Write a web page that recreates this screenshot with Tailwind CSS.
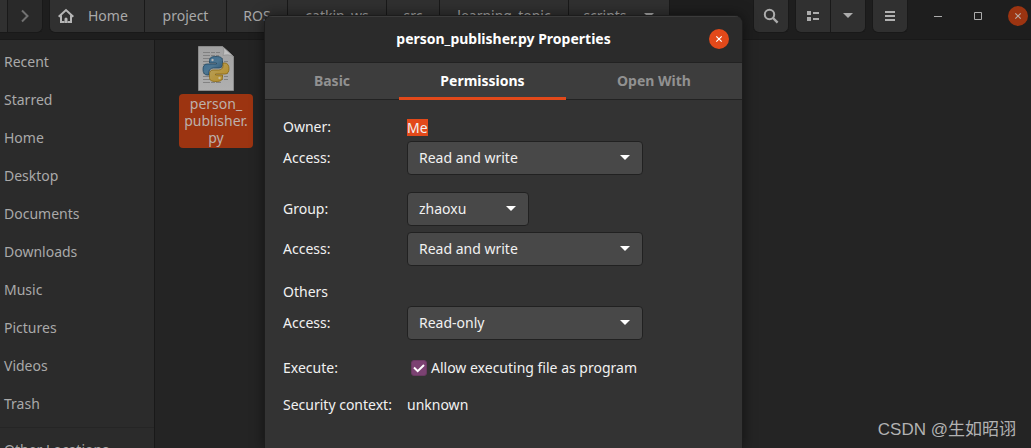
<!DOCTYPE html>
<html lang="en">
<head>
<meta charset="utf-8">
<title>person_publisher.py Properties</title>
<script src="https://cdn.jsdelivr.net/npm/@tailwindcss/browser@4"></script>
</head>
<body class="relative flex h-screen flex-col overflow-hidden bg-[#242424] font-['Noto_Sans','Open_Sans',sans-serif] text-sm leading-5 text-[#a9a9a9]">

<header class="flex h-10 shrink-0 items-start border-b border-[#191919] bg-[#1e1e1e]">
  <div class="flex h-[33px] shrink-0">
    <button aria-label="Back" class="w-2 border-r border-b border-[#191919] bg-[#303030]"></button>
    <button aria-label="Forward" class="flex w-[35px] items-center justify-center rounded-br-md border-r border-b border-[#191919] bg-[#292929]">
      <svg class="size-4" viewBox="0 0 16 16" fill="none" stroke="#717171" stroke-width="2"><path d="M5 2.5 10.5 8 5 13.5"/></svg>
    </button>
  </div>
  <nav aria-label="Path" class="ml-1.5 flex h-[33px] shrink-0 divide-x divide-[#191919] overflow-hidden rounded-b-md border-x border-b border-[#191919] bg-[#303030]">
    <button class="flex w-[95px] items-center gap-3.5 pl-2">
      <svg class="size-4" viewBox="0 0 16 16" fill="none" stroke="#b5b5b5" stroke-width="2"><path d="M.7 8.700 8 2l7.300 6.700M3 7.500v6.500h3.500M13 7.500v6.500H9.500"/><path fill="#b5b5b5" stroke="none" d="M6.500 15v-4a1.500 1.500 0 0 1 3 0v4z"/></svg>
      Home
    </button>
    <button class="w-[82px]">project</button>
    <button class="w-[61px]">ROS</button>
    <button class="w-[99px]">catkin_ws</button>
    <button class="w-[53px]">src</button>
    <button class="w-[129px]">learning_topic</button>
    <button class="flex w-[100px] items-center justify-center gap-4">scripts
      <svg class="h-1.5 w-3" viewBox="0 0 12 6" fill="#a9a9a9"><path d="M1 0h10L6 5z"/></svg>
    </button>
  </nav>
  <div class="ml-auto flex h-[33px] shrink-0 gap-1.5 pr-[3px]">
    <button aria-label="Search" class="flex w-9 items-center justify-center rounded-b-md border-x border-b border-[#191919] bg-[#303030]">
      <svg class="size-4" viewBox="0 0 16 16" fill="none" stroke="#acacac" stroke-width="2"><circle cx="6.500" cy="6.500" r="4.700"/><path stroke-width="2.400" d="m10 10 4.600 4.600"/></svg>
    </button>
    <div class="flex divide-x divide-[#191919] rounded-b-md border-x border-b border-[#191919] bg-[#303030]">
      <button aria-label="List view" class="flex w-[35px] items-center justify-center">
        <svg class="size-4" viewBox="0 0 16 16" fill="#acacac"><path d="M2 3h4v4H2zM2 9h4v4H2zM8 4h6v2H8zM8 10h6v2H8z"/></svg>
      </button>
      <button aria-label="View options" class="flex w-[34px] items-center justify-center">
        <svg class="h-1.5 w-3" viewBox="0 0 12 6" fill="#acacac"><path d="M1 0h10L6 5z"/></svg>
      </button>
    </div>
    <button aria-label="Menu" class="flex w-9 items-center justify-center rounded-b-md border-x border-b border-[#191919] bg-[#303030]">
      <svg class="size-4" viewBox="0 0 16 16" fill="#b0b0b0"><path d="M3 3h10v2H3zM3 7h10v2H3zM3 11h10v2H3z"/></svg>
    </button>
    <div class="ml-3.5 flex h-8 items-center gap-5">
      <button aria-label="Minimize" class="flex size-5 items-center justify-center"><svg class="size-4" viewBox="0 0 16 16" fill="#acacac"><path d="M4 8h8v1H4z"/></svg></button>
      <button aria-label="Maximize" class="flex size-5 items-center justify-center"><svg class="size-4" viewBox="0 0 16 16" fill="none" stroke="#acacac"><path d="M4.500 4.500h7v7h-7z"/></svg></button>
      <button aria-label="Close window" class="flex size-5 items-center justify-center rounded-full bg-[#9c3411]"><svg class="size-4" viewBox="0 0 16 16" fill="none" stroke="#b9aaa4" stroke-width="1.200"><path d="m5.300 5.300 5.400 5.400m0-5.400-5.400 5.400"/></svg></button>
    </div>
  </div>
</header>

<div class="flex min-h-0 flex-1">
  <aside class="w-[155px] shrink-0 overflow-hidden border-r border-[#191919] bg-[#2b2b2b] pt-[3px]">
    <nav aria-label="Places" class="flex flex-col">
      <a href="#" class="px-1 py-[9px]">Recent</a>
      <a href="#" class="px-1 py-[9px]">Starred</a>
      <a href="#" class="px-1 py-[9px]">Home</a>
      <a href="#" class="px-1 py-[9px]">Desktop</a>
      <a href="#" class="px-1 py-[9px]">Documents</a>
      <a href="#" class="px-1 py-[9px]">Downloads</a>
      <a href="#" class="px-1 py-[9px]">Music</a>
      <a href="#" class="px-1 py-[9px]">Pictures</a>
      <a href="#" class="px-1 py-[9px]">Videos</a>
      <a href="#" class="px-1 py-[9px]">Trash</a>
      <a href="#" class="mt-1 border-t border-[#252525] px-1 pt-3 pb-[9px]">Other Locations</a>
    </nav>
  </aside>
  <main class="flex min-w-0 flex-1 flex-col justify-between pt-1.5">
    <figure class="ml-6 flex w-[74px] flex-col items-center gap-[3px]">
      <svg class="h-[45px] w-9" viewBox="0 0 36 45">
        <defs>
          <linearGradient id="page" x2="0" y2="1"><stop stop-color="#a2a2a2"/><stop offset="1" stop-color="#b0b0b0"/></linearGradient>
          <linearGradient id="blue" x2="1" y2="1"><stop stop-color="#376a90"/><stop offset=".5" stop-color="#4d7692"/><stop offset="1" stop-color="#264e6c"/></linearGradient>
          <linearGradient id="gold" x2="1" y2="1"><stop stop-color="#b8a263"/><stop offset="1" stop-color="#b48b22"/></linearGradient>
        </defs>
        <path d="M.5.500h24l11 10v34H.5z" fill="url(#page)" stroke="#8a8a8a"/>
        <path d="M5 6.500h17M5 9.500h16M5 12.500h20M5 15.500h25M5 18.500h25M5 21.500h25M5 24.500h25M5 27.500h25M5 30.500h25M5 33.500h25M5 36.500h18" stroke="#777" stroke-dasharray="7 1 4 1" stroke-width=".8"/>
        <path d="M24.500.500c2 3 1.500 6 .5 9 3-1 7-1 10.500 1z" fill="#c0c0c0" stroke="#888" stroke-width=".6"/>
        <path d="M18 10.500c-5 0-6.500 1.500-6.500 4v2.500h7v1H9c-3 0-4 2.500-4 5.500s1.500 5.500 4 5.500h2v-3c0-2.500 2-4 4.500-4H21c2 0 3.500-1.500 3.500-3.500v-4c0-2.500-1.500-4-6.500-4z" fill="url(#blue)" stroke="#234760" stroke-width=".8"/>
        <path d="M18 35.500c5 0 6.500-1.500 6.500-4V29h-7v-1H27c3 0 4-2.500 4-5.500s-1.500-5.500-4-5.500h-2v3c0 2.500-2 4-4.500 4H15c-2 0-3.500 1.500-3.500 3.500v4c0 2.500 1.500 4 6.500 4z" fill="url(#gold)" stroke="#8b6811" stroke-width=".8"/>
        <circle cx="14.500" cy="14" r="1.200" fill="#b5b5b5"/><circle cx="21.500" cy="32" r="1.200" fill="#c9bd9c"/>
      </svg>
      <figcaption class="w-full rounded-sm bg-[#9c3411] pt-px pb-[2px] text-center leading-[17px] text-[#bdb0ab]">person_<br>publisher.<br>py</figcaption>
    </figure>
    <p class="self-end pr-[15px] pb-1.5 font-['Liberation_Sans','Noto_Sans_CJK_SC',sans-serif] text-[17px] leading-6 text-[#b2b2b2]">CSDN @生如昭诩</p>
  </main>
</div>

<!-- File properties dialog, floating over the file manager -->
<section role="dialog" aria-labelledby="dialog-title" class="absolute top-[15px] bottom-0 left-[264px] w-[479px] overflow-hidden rounded-t-lg border-x border-t border-[#1c1c1c] bg-[#333333] text-[#f1f1f1] shadow-[0_0_14px_rgba(0,0,0,0.5)]">
  <header class="grid h-[47px] grid-cols-[1fr_auto_1fr] items-center border-t border-b border-t-[#3b3b3b] border-b-[#222222] bg-[#2b2b2b] px-[13px] pb-px">
    <h1 id="dialog-title" class="col-start-2 font-bold text-white">person_publisher.py Properties</h1>
    <button aria-label="Close" class="flex size-5 items-center justify-center justify-self-end rounded-full bg-[#e2491a]"><svg class="size-4" viewBox="0 0 16 16" fill="none" stroke="#fff" stroke-width="1.200"><path d="m5.300 5.300 5.400 5.400m0-5.400-5.400 5.400"/></svg></button>
  </header>
  <div role="tablist" class="grid h-[37px] grid-cols-[134fr_167fr_176fr] border-b border-[#222222] bg-[#3d3d3d] font-bold text-[#919191]">
    <button role="tab" aria-selected="false">Basic</button>
    <button role="tab" aria-selected="true" class="-mb-px border-b-3 border-[#e2491a] pt-[2px] text-white">Permissions</button>
    <button role="tab" aria-selected="false">Open With</button>
  </div>
  <form class="grid grid-cols-[124px_1fr] items-center px-[18px] pt-[17px]">
    <span>Owner:</span>
    <span class="flex"><span class="bg-[#e2491a] leading-[17px]">Me</span></span>

    <label for="owner-access" class="mt-1">Access:</label>
    <div class="relative mt-1 w-[236px]">
      <select id="owner-access" class="block h-[34px] w-full appearance-none rounded border border-[#212121] bg-[#484848] px-[11px]"><option>Read and write</option></select>
      <svg class="pointer-events-none absolute top-3.5 right-3 h-1.5 w-3" viewBox="0 0 12 6" fill="#fff"><path d="M1 0h10L6 5z"/></svg>
    </div>

    <label for="group" class="mt-[17px]">Group:</label>
    <div class="relative mt-[17px] w-[122px]">
      <select id="group" class="block h-[34px] w-full appearance-none rounded border border-[#212121] bg-[#484848] px-[11px]"><option>zhaoxu</option></select>
      <svg class="pointer-events-none absolute top-3.5 right-3 h-1.5 w-3" viewBox="0 0 12 6" fill="#fff"><path d="M1 0h10L6 5z"/></svg>
    </div>

    <label for="group-access" class="mt-1.5">Access:</label>
    <div class="relative mt-1.5 w-[236px]">
      <select id="group-access" class="block h-[34px] w-full appearance-none rounded border border-[#212121] bg-[#484848] px-[11px]"><option>Read and write</option></select>
      <svg class="pointer-events-none absolute top-3.5 right-3 h-1.5 w-3" viewBox="0 0 12 6" fill="#fff"><path d="M1 0h10L6 5z"/></svg>
    </div>

    <span class="col-span-2 mt-4">Others</span>

    <label for="others-access" class="mt-1">Access:</label>
    <div class="relative mt-1 w-[236px]">
      <select id="others-access" class="block h-[34px] w-full appearance-none rounded border border-[#212121] bg-[#484848] px-[11px]"><option>Read-only</option></select>
      <svg class="pointer-events-none absolute top-3.5 right-3 h-1.5 w-3" viewBox="0 0 12 6" fill="#fff"><path d="M1 0h10L6 5z"/></svg>
    </div>

    <span class="mt-[18px]">Execute:</span>
    <label class="mt-[18px] flex items-center gap-1 pl-1">
      <span class="relative size-4">
        <input type="checkbox" checked class="peer block size-4 appearance-none rounded-[3px] border border-[#6a3a62] bg-[#4a4a4a] checked:bg-[#7b4272]">
        <svg class="pointer-events-none absolute inset-0 hidden size-4 peer-checked:block" viewBox="0 0 16 16" fill="none" stroke="#fff" stroke-width="2"><path d="m3 7.500 3.700 3.700L13 5"/></svg>
      </span>
      Allow executing file as program
    </label>

    <span class="mt-[17px] whitespace-nowrap">Security context:</span>
    <span class="mt-[17px]">unknown</span>
  </form>
</section>
</body>
</html>
